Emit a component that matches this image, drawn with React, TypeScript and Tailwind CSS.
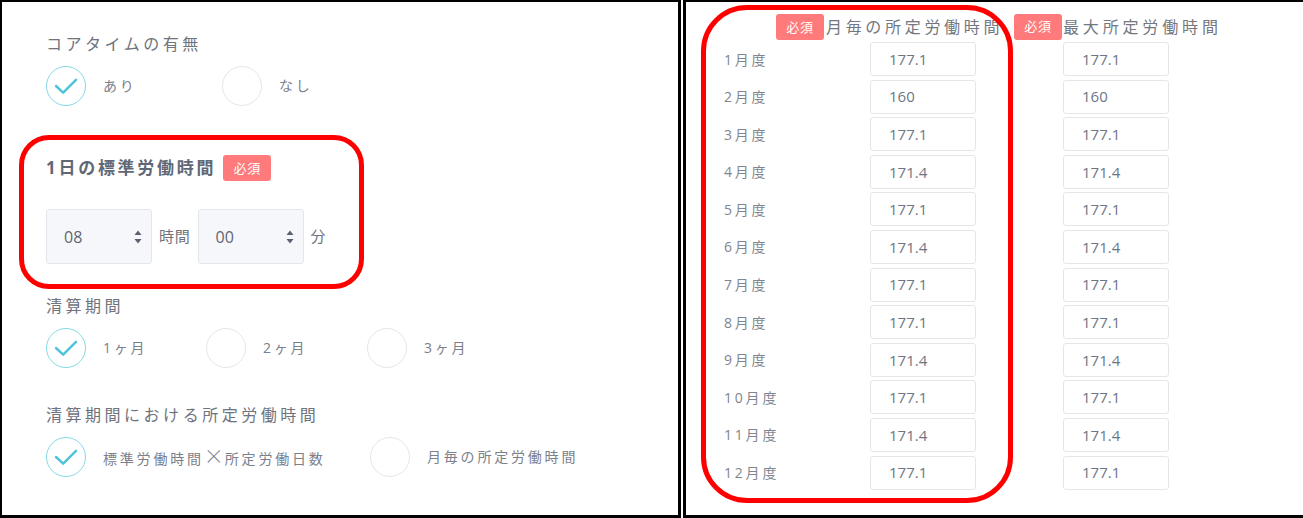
const months = [
  { m: '1月度', a: '177.1', b: '177.1' },
  { m: '2月度', a: '160', b: '160' },
  { m: '3月度', a: '177.1', b: '177.1' },
  { m: '4月度', a: '171.4', b: '171.4' },
  { m: '5月度', a: '177.1', b: '177.1' },
  { m: '6月度', a: '171.4', b: '171.4' },
  { m: '7月度', a: '177.1', b: '177.1' },
  { m: '8月度', a: '177.1', b: '177.1' },
  { m: '9月度', a: '171.4', b: '171.4' },
  { m: '10月度', a: '177.1', b: '177.1' },
  { m: '11月度', a: '171.4', b: '171.4' },
  { m: '12月度', a: '177.1', b: '177.1' },
];

function Radio({ label, checked, width }: { label: React.ReactNode; checked?: boolean; width: string }) {
  return (
    <div className={`flex items-center ${width}`}>
      <span
        className={`w-10 h-10 shrink-0 rounded-full border-[1.5px] flex items-center justify-center ${
          checked ? 'border-[#86d8e8]' : 'border-[#e4e6ea]'
        }`}
      >
        {checked && (
          <svg width="40" height="40" viewBox="0 0 40 40" fill="none">
            <path d="M9.5 20 L17 27 L30.5 13.5" stroke="#4fc3da" strokeWidth="2.6" strokeLinecap="round" strokeLinejoin="round" />
          </svg>
        )}
      </span>
      <span className="ml-[17px] text-[14px] leading-[20px] tracking-[0.2em] text-[#7b808a]">{label}</span>
    </div>
  );
}

function Badge() {
  return (
    <span className="inline-flex items-center justify-center w-[48px] h-[26px] rounded-[3px] bg-[#ff7b7b] text-white text-[13px] tracking-[0.05em]">
      必須
    </span>
  );
}

function SelectBox({ value }: { value: string }) {
  return (
    <div className="w-[106px] h-[55px] rounded-[3px] border border-[#e3e6ec] bg-[#f5f7fb] flex items-center justify-between pl-[17px] pr-[9px]">
      <span className="text-[16px] text-[#5f6673]">{value}</span>
      <svg width="8" height="14" viewBox="0 0 8 14">
        <path d="M4 0.5 L7.5 5 L0.5 5 Z" fill="#5a6170" />
        <path d="M4 13.5 L7.5 9 L0.5 9 Z" fill="#5a6170" />
      </svg>
    </div>
  );
}

export default function App() {
  return (
    <div className="flex h-[518px] w-[1303px] bg-white font-['Open_Sans','Noto_Sans_CJK_JP',sans-serif] overflow-hidden">
      {/* Left panel */}
      <div className="relative w-[681px] h-full border-l-2 border-t-2 border-r-[3px] border-b-[3px] border-black pl-[44px] pt-[32px]">
        <div className="text-[16px] leading-[20px] tracking-[0.22em] text-[#6e737e]">コアタイムの有無</div>
        <div className="flex mt-[12px]">
          <Radio label="あり" checked width="w-[176px]" />
          <Radio label="なし" width="w-[160px]" />
        </div>

        <div className="flex items-center mt-[49px] h-[26px]">
          <span className="text-[17px] font-bold leading-[20px] tracking-[0.16em] text-[#616875]">1日の標準労働時間</span>
          <span className="ml-[7px]">
            <Badge />
          </span>
        </div>

        <div className="flex items-center mt-[28px]">
          <SelectBox value="08" />
          <span className="mx-[7px] text-[15px] tracking-[0.05em] text-[#6e737e]">時間</span>
          <SelectBox value="00" />
          <span className="ml-[7px] text-[15px] text-[#6e737e]">分</span>
        </div>

        <div className="mt-[32px] text-[16px] leading-[20px] tracking-[0.22em] text-[#6e737e]">清算期間</div>
        <div className="flex mt-[12px]">
          <Radio label="1ヶ月" checked width="w-[160px]" />
          <Radio label="2ヶ月" width="w-[161px]" />
          <Radio label="3ヶ月" width="w-[160px]" />
        </div>

        <div className="mt-[37px] text-[16px] leading-[20px] tracking-[0.22em] text-[#6e737e]">清算期間における所定労働時間</div>
        <div className="flex mt-[12px]">
          <Radio
            label={
              <>
                標準労働時間<span className="font-['Noto_Sans_CJK_JP'] font-light text-[20px] leading-[20px] tracking-[0.05em]">×</span>所定労働日数
              </>
            }
            checked
            width="w-[324px]"
          />
          <Radio label="月毎の所定労働時間" width="w-[220px]" />
        </div>

        {/* annotation */}
        <div className="absolute left-[17px] top-[133px] w-[345px] h-[154px] border-[5px] border-[#ff0000] rounded-[30px] pointer-events-none" />
      </div>

      <div className="w-[2px]" />

      {/* Right panel */}
      <div className="relative flex-1 h-full border-l-[3px] border-t-2 border-b-[3px] border-black pl-[38px] pt-[12px]">
        <div className="flex items-center h-[26px]">
          <span className="ml-[52px]">
            <Badge />
          </span>
          <span className="ml-[2px] text-[16px] tracking-[0.23em] text-[#73777f] w-[188px] whitespace-nowrap">月毎の所定労働時間</span>
          <Badge />
          <span className="ml-[1px] text-[16px] tracking-[0.24em] text-[#73777f]">最大所定労働時間</span>
        </div>

        <div className="flex flex-col gap-[3.6px] mt-[2px]">
          {months.map((r) => (
            <div key={r.m} className="flex items-center">
              <span className="w-[146px] text-[14px] tracking-[0.2em] text-[#80858f]">{r.m}</span>
              <div className="w-[106px] h-[34px] rounded-[3px] border border-[#e4e6ea] bg-white flex items-center pl-[18px] text-[15px] text-[#6e7685]">
                {r.a}
              </div>
              <div className="ml-[87px] w-[106px] h-[34px] rounded-[3px] border border-[#e4e6ea] bg-white flex items-center pl-[18px] text-[15px] text-[#6e7685]">
                {r.b}
              </div>
            </div>
          ))}
        </div>

        {/* annotation */}
        <div className="absolute left-[15px] top-[3px] w-[312px] h-[498px] border-[5px] border-[#ff0000] rounded-[46px] pointer-events-none" />
      </div>
    </div>
  );
}
